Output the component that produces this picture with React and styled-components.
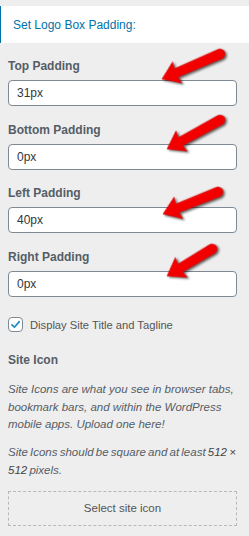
import React from 'react'
import styled, { createGlobalStyle } from 'styled-components'

const fields = [
  { label: 'Top Padding', value: '31px', tip: [154, 23], tail: [212, -2] },
  { label: 'Bottom Padding', value: '0px', tip: [159, 29], tail: [212, 0] },
  { label: 'Left Padding', value: '40px', tip: [155, 31], tail: [210, 9] },
  { label: 'Right Padding', value: '0px', tip: [159, 29], tail: [204, 2] },
]

function Arrow({ tip, tail }) {
  const dx = tail[0] - tip[0]
  const dy = tail[1] - tip[1]
  const len = Math.sqrt(dx * dx + dy * dy)
  const angle = (Math.atan2(dy, dx) * 180) / Math.PI
  const d = `M0,0 L16.5,-11.5 L15.5,-4.6 L${len},-5 A5,5 0 0 1 ${len},5 L15.5,4.6 L16.5,11.5 Z`

  return (
    <ArrowSvg>
      <path
        d={d}
        transform={`translate(${tip[0]} ${tip[1]}) rotate(${angle})`}
      />
    </ArrowSvg>
  )
}

export default function App() {
  return (
    <>
      <GlobalStyle />
      <Panel>
        <SectionTitle>Set Logo Box Padding:</SectionTitle>
        <Content>
          {fields.map((f) => (
            <Field key={f.label}>
              <Label>{f.label}</Label>
              <TextInput type="text" defaultValue={f.value} />
              <Arrow tip={f.tip} tail={f.tail} />
            </Field>
          ))}

          <CheckRow>
            <CheckBox>
              <svg width="13" height="13" viewBox="0 0 20 20">
                <path
                  d="M4.5 10.5 L8.3 14.2 L15.8 5.5"
                  fill="none"
                  stroke="#1e8cbe"
                  strokeWidth="2.6"
                  strokeLinecap="round"
                  strokeLinejoin="round"
                />
              </svg>
            </CheckBox>
            <CheckText>Display Site Title and Tagline</CheckText>
          </CheckRow>

          <Heading>Site Icon</Heading>
          <Description>
            Site Icons are what you see in browser tabs, bookmark bars, and
            within the WordPress mobile apps. Upload one here!
          </Description>
          <Description $second>
            Site Icons should be square and at least <strong>512 × 512</strong>{' '}
            pixels.
          </Description>

          <UploadButton type="button">Select site icon</UploadButton>
        </Content>
      </Panel>
    </>
  )
}

const GlobalStyle = createGlobalStyle`
  html, body {
    margin: 0;
    background: #eeeeee;
  }
  body {
    font-family: "Liberation Sans", Arial, sans-serif;
  }
`

const Panel = styled.div`
  width: 249px;
  padding-top: 6px;
`

const SectionTitle = styled.h3`
  display: flex;
  align-items: center;
  height: 37px;
  margin: 0;
  padding-left: 12px;
  background: #fff;
  border-left: 1px solid #0073aa;
  color: #0073aa;
  font-size: 12px;
  font-weight: 400;
`

const Content = styled.div`
  display: flex;
  flex-direction: column;
  padding: 13px 12px 0 8px;
`

const Field = styled.div`
  position: relative;
  display: flex;
  flex-direction: column;
  margin-bottom: 13.7px;
`

const Label = styled.label`
  display: block;
  height: 20px;
  line-height: 20px;
  margin-bottom: 4px;
  color: #555d66;
  font-size: 12px;
  font-weight: 700;
`

const TextInput = styled.input`
  box-sizing: border-box;
  width: 100%;
  height: 26px;
  margin: 0;
  padding: 0 8px;
  background: #fff;
  border: 1px solid #7e8993;
  border-radius: 4px;
  color: #32373c;
  font-family: "Liberation Sans", Arial, sans-serif;
  font-size: 12px;
  outline: none;
`

const ArrowSvg = styled.svg`
  position: absolute;
  left: 0;
  top: 0;
  width: 100%;
  height: 100%;
  overflow: visible;
  pointer-events: none;

  path {
    fill: #f20000;
    stroke: #d40000;
    stroke-width: 0.6;
    filter: drop-shadow(1.5px 2px 1.3px rgba(0, 0, 0, 0.6));
  }
`

const CheckRow = styled.div`
  display: flex;
  align-items: center;
  gap: 7px;
  margin-top: 6px;
  height: 16px;
`

const CheckBox = styled.span`
  box-sizing: border-box;
  display: flex;
  align-items: center;
  justify-content: center;
  width: 15px;
  height: 15px;
  background: #fff;
  border: 1px solid #7e8993;
  border-radius: 4px;
`

const CheckText = styled.span`
  color: #555;
  font-size: 11.2px;
`

const Heading = styled.div`
  margin-top: 19px;
  height: 16px;
  line-height: 16px;
  color: #555d66;
  font-size: 12px;
  font-weight: 700;
`

const Description = styled.p`
  margin: ${(p) => (p.$second ? '10.5px' : '13.5px')} 0 0;
  color: #555d66;
  font-size: 11.5px;
  font-style: italic;
  line-height: 17.5px;
  word-spacing: ${(p) => (p.$second ? '-1px' : '0')};

  strong {
    font-weight: 400;
    color: #444;
  }
`

const UploadButton = styled.button`
  box-sizing: border-box;
  width: 100%;
  height: 35px;
  margin-top: 11.5px;
  background: transparent;
  border: 1px dashed #b4b9be;
  border-radius: 0;
  color: #555;
  font-family: "Liberation Sans", Arial, sans-serif;
  font-size: 11.5px;
`
